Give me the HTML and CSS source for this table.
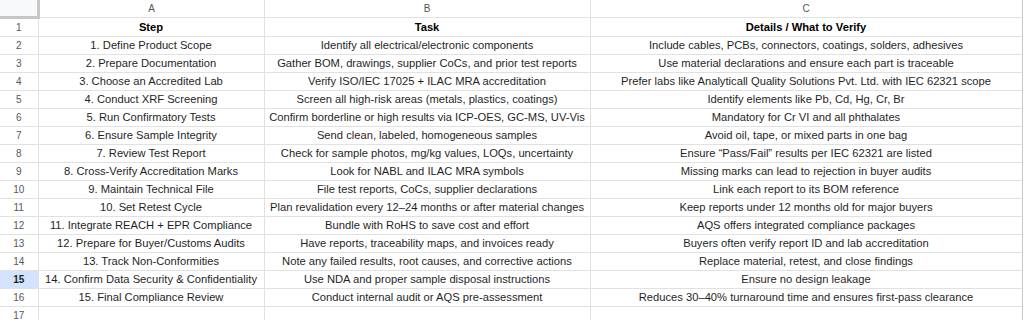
FILE: index.html
```html
<!DOCTYPE html>
<html>
<head>
<meta charset="utf-8">
<link rel="stylesheet" href="styles.css">
</head>
<body>
<div class="sheet">
<table class="grid">
<colgroup><col class="c-rn"><col class="c-a"><col class="c-b"><col class="c-c"></colgroup>
<thead>
<tr class="colhead"><th class="corner"></th><th>A</th><th>B</th><th>C</th></tr>
</thead>
<tbody>
<tr class="bold"><th class="rn">1</th><td>Step</td><td>Task</td><td>Details / What to Verify</td></tr>
<tr><th class="rn">2</th><td>1. Define Product Scope</td><td>Identify all electrical/electronic components</td><td>Include cables, PCBs, connectors, coatings, solders, adhesives</td></tr>
<tr><th class="rn">3</th><td>2. Prepare Documentation</td><td>Gather BOM, drawings, supplier CoCs, and prior test reports</td><td>Use material declarations and ensure each part is traceable</td></tr>
<tr><th class="rn">4</th><td>3. Choose an Accredited Lab</td><td>Verify ISO/IEC 17025 + ILAC MRA accreditation</td><td>Prefer labs like Analyticall Quality Solutions Pvt. Ltd. with IEC 62321 scope</td></tr>
<tr><th class="rn">5</th><td>4. Conduct XRF Screening</td><td>Screen all high-risk areas (metals, plastics, coatings)</td><td>Identify elements like Pb, Cd, Hg, Cr, Br</td></tr>
<tr><th class="rn">6</th><td>5. Run Confirmatory Tests</td><td>Confirm borderline or high results via ICP-OES, GC-MS, UV-Vis</td><td>Mandatory for Cr VI and all phthalates</td></tr>
<tr><th class="rn">7</th><td>6. Ensure Sample Integrity</td><td>Send clean, labeled, homogeneous samples</td><td>Avoid oil, tape, or mixed parts in one bag</td></tr>
<tr><th class="rn">8</th><td>7. Review Test Report</td><td>Check for sample photos, mg/kg values, LOQs, uncertainty</td><td>Ensure “Pass/Fail” results per IEC 62321 are listed</td></tr>
<tr><th class="rn">9</th><td>8. Cross-Verify Accreditation Marks</td><td>Look for NABL and ILAC MRA symbols</td><td>Missing marks can lead to rejection in buyer audits</td></tr>
<tr><th class="rn">10</th><td>9. Maintain Technical File</td><td>File test reports, CoCs, supplier declarations</td><td>Link each report to its BOM reference</td></tr>
<tr><th class="rn">11</th><td>10. Set Retest Cycle</td><td>Plan revalidation every 12–24 months or after material changes</td><td>Keep reports under 12 months old for major buyers</td></tr>
<tr><th class="rn">12</th><td>11. Integrate REACH + EPR Compliance</td><td>Bundle with RoHS to save cost and effort</td><td>AQS offers integrated compliance packages</td></tr>
<tr><th class="rn">13</th><td>12. Prepare for Buyer/Customs Audits</td><td>Have reports, traceability maps, and invoices ready</td><td>Buyers often verify report ID and lab accreditation</td></tr>
<tr><th class="rn">14</th><td>13. Track Non-Conformities</td><td>Note any failed results, root causes, and corrective actions</td><td>Replace material, retest, and close findings</td></tr>
<tr class="sel"><th class="rn">15</th><td>14. Confirm Data Security &amp; Confidentiality</td><td>Use NDA and proper sample disposal instructions</td><td>Ensure no design leakage</td></tr>
<tr><th class="rn">16</th><td>15. Final Compliance Review</td><td>Conduct internal audit or AQS pre-assessment</td><td>Reduces 30–40% turnaround time and ensures first-pass clearance</td></tr>
<tr><th class="rn">17</th><td></td><td></td><td></td></tr>
</tbody>
</table>
</div>
</body>
</html>
```
FILE: styles.css
```css
html, body {
  margin: 0;
  padding: 0;
  background: #ffffff;
}
body {
  font-family: "Liberation Sans", Arial, sans-serif;
  color: #1f1f1f;
  overflow: hidden;
}
.sheet {
  width: 1022px;
  height: 320px;
  border-right: 1px solid #c7c7c7;
  overflow: hidden;
}
.grid {
  border-collapse: collapse;
  table-layout: fixed;
  width: 1022px;
}
.c-rn { width: 38px; }
.c-a { width: 226px; }
.c-b { width: 326px; }
.c-c { width: 432px; }

.grid th, .grid td {
  padding: 0 3px;
  border: 1px solid #e1e1e1;
  white-space: nowrap;
  overflow: hidden;
  text-align: center;
  font-size: 11.2px;
  height: 17px;
  line-height: 17px;
}
.grid tr:first-child th, .grid tr:first-child td { border-top: none; }
.grid th:first-child, .grid td:first-child { border-left: none; }

.colhead th {
  font-weight: normal;
  font-size: 10px;
  color: #575757;
  height: 16px;
  line-height: 16px;
  background: #ffffff;
}
.colhead th.corner {
  background: #f8f9fa;
  border-right: 3px solid #c4c7c5;
  border-bottom: 3px solid #c4c7c5;
}
.rn {
  font-weight: normal;
  font-size: 10px;
  color: #575757;
  background: #ffffff;
}
.grid .rn { font-size: 10px; }
.bold td {
  font-weight: bold;
  color: #000;
}
.sel .rn {
  background: #d3e3fd;
  color: #1f1f1f;
  font-weight: bold;
}
```
